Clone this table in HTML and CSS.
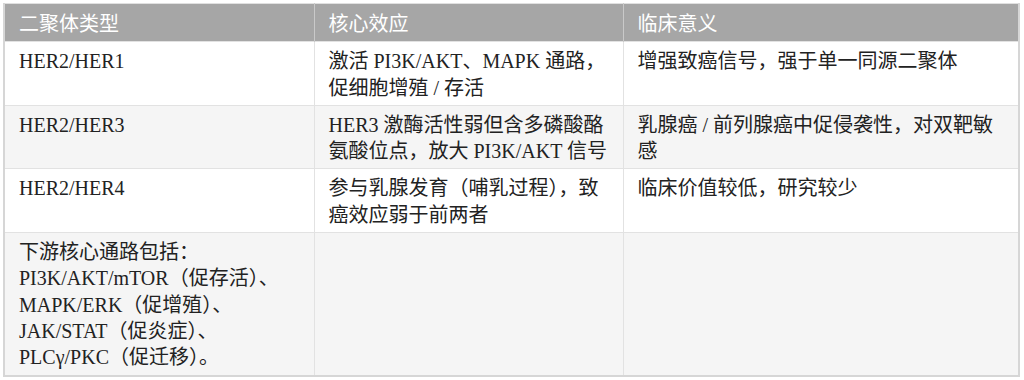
FILE: index.html
```html
<!DOCTYPE html>
<html lang="zh">
<head>
<meta charset="utf-8">
<link rel="stylesheet" href="styles.css">
</head>
<body>
<table class="her">
  <colgroup>
    <col class="c1">
    <col class="c2">
    <col class="c3">
  </colgroup>
  <thead>
    <tr><th>二聚体类型</th><th>核心效应</th><th>临床意义</th></tr>
  </thead>
  <tbody>
    <tr>
      <td>HER2/HER1</td>
      <td>激活 PI3K/AKT、MAPK 通路，促细胞增殖 / 存活</td>
      <td>增强致癌信号，强于单一同源二聚体</td>
    </tr>
    <tr class="alt">
      <td>HER2/HER3</td>
      <td>HER3 激酶活性弱但含多磷酸酪氨酸位点，放大 PI3K/AKT 信号</td>
      <td>乳腺癌 / 前列腺癌中促侵袭性，对双靶敏感</td>
    </tr>
    <tr>
      <td>HER2/HER4</td>
      <td>参与乳腺发育（哺乳过程），致癌效应弱于前两者</td>
      <td>临床价值较低，研究较少</td>
    </tr>
    <tr class="alt">
      <td>下游核心通路包括：<br>PI3K/AKT/mTOR（促存活）、<br>MAPK/ERK（促增殖）、<br>JAK/STAT（促炎症）、<br>PLCγ/PKC（促迁移）。</td>
      <td></td>
      <td></td>
    </tr>
  </tbody>
</table>
</body>
</html>
```
FILE: styles.css
```css
html, body {
  background: #ffffff;
}
body {
  margin: 3px;
  font-family: "Liberation Serif", "Noto Sans CJK SC", serif;
  font-size: 20px;
  line-height: 26.3px;
  color: #222222;
}
.her {
  width: 1017px;
  border-collapse: collapse;
  table-layout: fixed;
  border: 2px solid #d6d6d6;
  border-top: 1px solid #e0e0e0;
}
.c1 { width: 310px; }
.c2 { width: 309px; }
.c3 { width: auto; }
.her th {
  background: #a6a6a6;
  color: #ffffff;
  font-weight: normal;
  text-align: left;
  padding: 7px 14px 4px;
  border-left: 1px solid #c9c9c9;
}
.her th:first-child { border-left: none; }
.her td {
  padding: 6px 14px 4px;
  vertical-align: top;
  border: 1px solid #e2e2e2;
  background: #ffffff;
}
.her tr.alt td {
  background: #f5f5f5;
}
.her td:first-child { border-left: none; }
.her td:last-child { border-right: none; }
```
